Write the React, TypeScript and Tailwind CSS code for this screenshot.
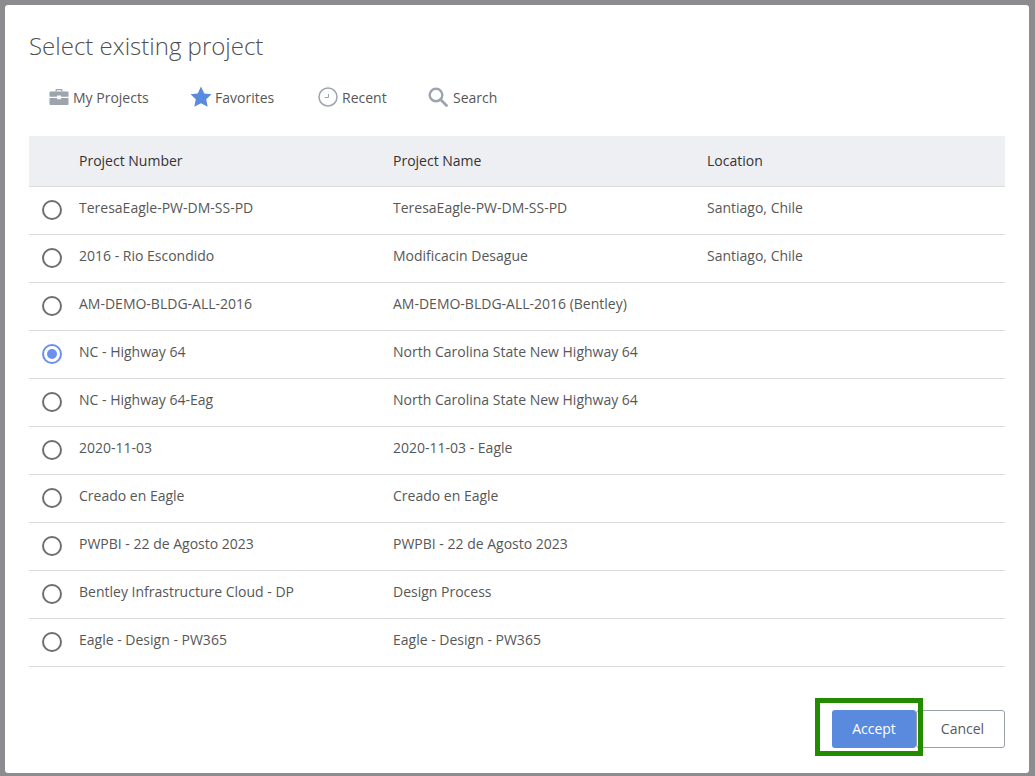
const ROWS = [
  { number: "TeresaEagle-PW-DM-SS-PD", name: "TeresaEagle-PW-DM-SS-PD", location: "Santiago, Chile" },
  { number: "2016 - Rio Escondido", name: "Modificacin Desague", location: "Santiago, Chile" },
  { number: "AM-DEMO-BLDG-ALL-2016", name: "AM-DEMO-BLDG-ALL-2016 (Bentley)", location: "" },
  { number: "NC - Highway 64", name: "North Carolina State New Highway 64", location: "", selected: true },
  { number: "NC - Highway 64-Eag", name: "North Carolina State New Highway 64", location: "" },
  { number: "2020-11-03", name: "2020-11-03 - Eagle", location: "" },
  { number: "Creado en Eagle", name: "Creado en Eagle", location: "" },
  { number: "PWPBI - 22 de Agosto 2023", name: "PWPBI - 22 de Agosto 2023", location: "" },
  { number: "Bentley Infrastructure Cloud - DP", name: "Design Process", location: "" },
  { number: "Eagle - Design - PW365", name: "Eagle - Design - PW365", location: "" },
];

function BriefcaseIcon() {
  return (
    <svg width="20" height="20" viewBox="0 0 20 20" fill="#9ca4ae">
      <path d="M6.500 4.500V3.200C6.500 2.500 7 2 7.700 2h4.600c.7 0 1.200.5 1.200 1.200v1.300h-1.300V3.300H7.800v1.200z" />
      <path d="M1.500 4.500h17c.5 0 1 .5 1 1v4.300H12V8.500H8v1.300H.5V5.500c0-.5.500-1 1-1z" />
      <path d="M.5 11h7.500v1.300h4V11h7.500v6c0 .6-.5 1-1 1h-17c-.5 0-1-.4-1-1z" />
    </svg>
  );
}

function StarIcon() {
  return (
    <svg width="22" height="22" viewBox="0 0 22 22" fill="#5a8ade">
      <path d="M11 .5l3.300 7 7.200.8-5.300 5 1.500 7.500L11 17.200l-6.700 3.600 1.500-7.500-5.300-5 7.200-.8z" />
    </svg>
  );
}

function ClockIcon() {
  return (
    <svg width="20" height="20" viewBox="0 0 20 20" fill="none" stroke="#9ca4ae">
      <circle cx="10" cy="10" r="9" strokeWidth="1.500" />
      <path d="M10.500 7v3.500H6.500" strokeWidth="1" />
    </svg>
  );
}

function SearchIcon() {
  return (
    <svg width="20" height="20" viewBox="0 0 20 20" fill="none" stroke="#9ca4ae">
      <circle cx="8" cy="8" r="6.300" strokeWidth="2.400" />
      <path d="M12.500 12.500L18.500 18.500" strokeWidth="2.800" strokeLinecap="round" />
    </svg>
  );
}

function Radio({ checked }: { checked?: boolean }) {
  return (
    <span
      className={`flex h-[20px] w-[20px] items-center justify-center rounded-full border-2 ${
        checked ? "border-[#6b8ff0]" : "border-[#6f6f6f]"
      }`}
    >
      {checked && <span className="h-[10px] w-[10px] rounded-full bg-[#6b8ff0]" />}
    </span>
  );
}

export default function App() {
  return (
    <div className="h-[776px] w-[1035px] bg-[#8c8c8e] pl-[5px] pt-[5px] font-['Open_Sans',sans-serif] text-[14px] text-[#575757]">
      <div className="relative flex h-[768px] w-[1024px] flex-col rounded-[3px] bg-white pl-[24px] pr-[24px]">
        <h1 className="mt-[23px] text-[24px] leading-[36px] font-light text-[#4f4f4f]">Select existing project</h1>

        <div className="mt-[13px] flex h-[40px] items-center pl-[20px]">
          <div className="flex w-[141px] items-center gap-[4px]">
            <BriefcaseIcon />
            <span>My Projects</span>
          </div>
          <div className="flex w-[128px] items-center gap-[3px]">
            <StarIcon />
            <span>Favorites</span>
          </div>
          <div className="flex w-[110px] items-center gap-[4px]">
            <ClockIcon />
            <span>Recent</span>
          </div>
          <div className="flex items-center gap-[5px]">
            <SearchIcon />
            <span>Search</span>
          </div>
        </div>

        <div className="mt-[19px]">
          <div className="grid h-[51px] grid-cols-[50px_314px_314px_1fr] items-center border-b border-[#dcdcdc] bg-[#eeeff2] pb-[2px] text-[#333333]">
            <span />
            <span>Project Number</span>
            <span>Project Name</span>
            <span>Location</span>
          </div>
          {ROWS.map((row) => (
            <div
              key={row.number}
              className="grid h-[48px] grid-cols-[50px_314px_314px_1fr] items-center border-b border-[#dcdcdc] pb-[6px]"
            >
              <span className="flex justify-center pt-[4px] pr-[5px]">
                <Radio checked={row.selected} />
              </span>
              <span>{row.number}</span>
              <span>{row.name}</span>
              <span>{row.location}</span>
            </div>
          ))}
        </div>

        <div className="mt-[43px] flex justify-end">
          <button className="h-[38px] w-[84px] rounded-[3px] bg-[#5a8ade] pb-[2px] text-white">Accept</button>
          <button className="h-[38px] w-[89px] rounded-[3px] border border-[#9a9ea6] bg-white pb-[2px] pl-[4px] text-[#55595f]">Cancel</button>
        </div>

        {/* green highlight drawn over the Accept button */}
        <div className="absolute left-[810px] top-[693px] h-[58px] w-[108px] border-[5px] border-[#228b00]" />
      </div>
    </div>
  );
}
